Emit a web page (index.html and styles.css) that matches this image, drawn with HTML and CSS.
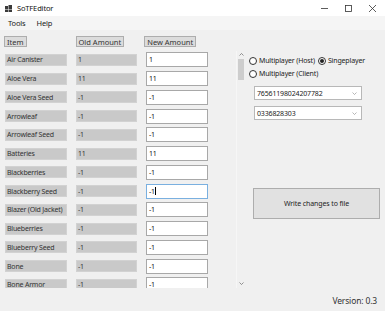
FILE: index.html
```html
<!DOCTYPE html>
<html lang="en">
<head>
    <meta charset="UTF-8">
    <title>SoTFEditor</title>
    <link rel="stylesheet" href="styles.css">
</head>
<body>
    <div class="titlebar">
        <svg class="app-icon" width="7" height="7" viewBox="0 0 7 7">
            <rect x="0" y="1" width="3" height="3" fill="#3a3a3a"/>
            <rect x="3.5" y="0" width="3.5" height="4" fill="#3a3a3a"/>
            <rect x="0" y="4.5" width="3" height="2.5" fill="#3a3a3a"/>
            <rect x="3.5" y="4.5" width="3.5" height="2.5" fill="#3a3a3a"/>
        </svg>
        <span class="title">SoTFEditor</span>
        <div class="win-controls">
            <svg width="7" height="7" viewBox="0 0 7 7"><line x1="0" y1="3.5" x2="7" y2="3.5" stroke="#333" stroke-width="0.8"/></svg>
            <svg width="7" height="7" viewBox="0 0 7 7"><rect x="0.5" y="0.5" width="6" height="6" fill="none" stroke="#333" stroke-width="0.8"/></svg>
            <svg width="7" height="7" viewBox="0 0 7 7"><path d="M0 0 L7 7 M7 0 L0 7" stroke="#333" stroke-width="0.8"/></svg>
        </div>
    </div>

    <div class="menubar">
        <span>Tools</span>
        <span>Help</span>
    </div>

    <div class="main">
        <div class="left">
            <div class="headers">
                <span class="hdr hdr-item">Item</span>
                <span class="hdr hdr-old">Old Amount</span>
                <span class="hdr hdr-new">New Amount</span>
            </div>
            <div class="list-wrap">
                <div class="list" id="list"></div>
                <div class="scrollbar">
                    <svg class="arrow" width="5" height="3" viewBox="0 0 5 3"><path d="M0.5 2.5 L2.5 0.5 L4.5 2.5" fill="none" stroke="#666" stroke-width="0.7"/></svg>
                    <div class="thumb"></div>
                    <div class="track"></div>
                    <svg class="arrow" width="5" height="3" viewBox="0 0 5 3"><path d="M0.5 0.5 L2.5 2.5 L4.5 0.5" fill="none" stroke="#666" stroke-width="0.7"/></svg>
                </div>
            </div>
        </div>

        <div class="right">
            <div class="radios">
                <div class="radio-row">
                    <label class="radio"><span class="dot"></span>Multiplayer (Host)</label>
                    <label class="radio"><span class="dot checked"></span>Singeplayer</label>
                </div>
                <div class="radio-row">
                    <label class="radio"><span class="dot"></span>Multiplayer (Client)</label>
                </div>
            </div>
            <div class="combo">
                <span>76561198024207782</span>
                <svg width="5" height="3" viewBox="0 0 5 3"><path d="M0.5 0.5 L2.5 2.5 L4.5 0.5" fill="none" stroke="#888" stroke-width="0.6"/></svg>
            </div>
            <div class="combo">
                <span>0336828303</span>
                <svg width="5" height="3" viewBox="0 0 5 3"><path d="M0.5 0.5 L2.5 2.5 L4.5 0.5" fill="none" stroke="#888" stroke-width="0.6"/></svg>
            </div>
            <button class="write-btn">Write changes to file</button>
        </div>
    </div>

    <div class="footer">Version: 0.3</div>

    <script>
        // item list shown in the editor
        const items = [
            ['Air Canister', '1', '1'],
            ['Aloe Vera', '11', '11'],
            ['Aloe Vera Seed', '-1', '-1'],
            ['Arrowleaf', '-1', '-1'],
            ['Arrowleaf Seed', '-1', '-1'],
            ['Batteries', '11', '11'],
            ['Blackberries', '-1', '-1'],
            ['Blackberry Seed', '-1', '-1'],
            ['Blazer (Old Jacket)', '-1', '-1'],
            ['Blueberries', '-1', '-1'],
            ['Blueberry Seed', '-1', '-1'],
            ['Bone', '-1', '-1'],
            ['Bone Armor', '-1', '-1']
        ];

        const list = document.getElementById('list');
        list.innerHTML = items.map((item, i) => `
            <div class="row">
                <span class="ro">${item[0]}</span>
                <span class="ro">${item[1]}</span>
                <span class="box${i === 7 ? ' focused' : ''}">${item[2]}${i === 7 ? '<i class="caret"></i>' : ''}</span>
            </div>
        `).join('');
    </script>
</body>
</html>
```

FILE: styles.css
```css
* {
    margin: 0;
    padding: 0;
    box-sizing: border-box;
    font-family: "Noto Sans", "Open Sans", sans-serif;
}

body {
    background-color: #f0f0f0;
    width: 385px;
    height: 311px;
    overflow: hidden;
    color: #1a1a1a;
    font-size: 7px;
    letter-spacing: -0.15px;
}

.titlebar {
    height: 16px;
    background-color: #ffffff;
    display: flex;
    align-items: center;
    padding-left: 5px;
}

.title {
    margin-left: 5px;
    font-size: 7.5px;
    color: #111;
}

.win-controls {
    margin-left: auto;
    display: flex;
    align-items: center;
    gap: 17px;
    padding-right: 9px;
}

.menubar {
    height: 14px;
    display: flex;
    align-items: center;
    gap: 11px;
    padding-left: 8px;
    background-color: #f5f5f5;
    font-size: 7.5px;
}

.main {
    display: flex;
    height: 260px;
}

.left {
    width: 246px;
}

.headers {
    display: flex;
    margin-top: 6px;
    height: 11px;
    padding-left: 4px;
}

.hdr {
    display: flex;
    align-items: center;
    padding: 0 2px;
    height: 11px;
    background-color: #dcdcdc;
    border: 1px solid #adadad;
    color: #333;
    font-size: 7.5px;
    letter-spacing: 0;
}

.hdr-old {
    margin-left: 49px;
}

.hdr-new {
    margin-left: 20px;
}

.list-wrap {
    display: flex;
    margin-top: 3.6px;
    height: 237px;
}

.list {
    width: 236px;
    overflow: hidden;
    padding-left: 5px;
}

.row {
    display: grid;
    grid-template-columns: 62px 61px 62px;
    column-gap: 9px;
    align-items: center;
    height: 18.75px;
}

.ro {
    height: 12px;
    background-color: #c9c9c9;
    border: 1px solid #d2d2d2;
    padding-left: 1px;
    display: flex;
    align-items: center;
    color: #333;
    white-space: nowrap;
    overflow: hidden;
    letter-spacing: -0.2px;
}

.box {
    height: 15px;
    background-color: #ffffff;
    border: 1px solid #a8a8a8;
    padding-left: 2px;
    display: flex;
    align-items: center;
    color: #111;
}

.box.focused {
    border-color: #7ab0e0;
}

.caret {
    width: 0.6px;
    height: 8px;
    background-color: #000;
    margin-left: 0.5px;
}

.scrollbar {
    width: 9px;
    display: flex;
    flex-direction: column;
    align-items: center;
    border-left: 1px solid #f6f6f6;
    padding: 2px 0 3px;
}

.thumb {
    width: 6px;
    height: 21px;
    margin-top: 3px;
    background-color: #cdcdcd;
}

.track {
    flex: 1;
}

.right {
    flex: 1;
    padding-left: 3px;
}

.radios {
    margin-top: 24px;
}

.radio-row {
    display: flex;
    height: 13px;
    align-items: center;
}

.radio {
    display: flex;
    align-items: center;
    color: #222;
    margin-right: 3px;
}

.dot {
    width: 8px;
    height: 8px;
    border-radius: 50%;
    border: 1px solid #333;
    background-color: #fff;
    margin-right: 2px;
    display: flex;
    align-items: center;
    justify-content: center;
}

.dot.checked::after {
    content: "";
    width: 4px;
    height: 4px;
    border-radius: 50%;
    background-color: #222;
}

.combo {
    width: 108px;
    height: 14px;
    margin-left: 5px;
    margin-top: 6px;
    background-color: #ffffff;
    border: 1px solid #b8b8b8;
    display: flex;
    align-items: center;
    justify-content: space-between;
    padding: 0 4px 0 2px;
    color: #222;
}

.combo + .combo {
    margin-top: 6px;
}

.write-btn {
    display: block;
    width: 127px;
    height: 31px;
    margin: 68px 0 0 4px;
    background-color: #e1e1e1;
    border: 1px solid #adadad;
    color: #222;
    font-size: 7px;
    letter-spacing: -0.1px;
}

.footer {
    text-align: right;
    padding-right: 8px;
    padding-top: 5px;
    font-size: 8.5px;
    color: #333;
}
```
